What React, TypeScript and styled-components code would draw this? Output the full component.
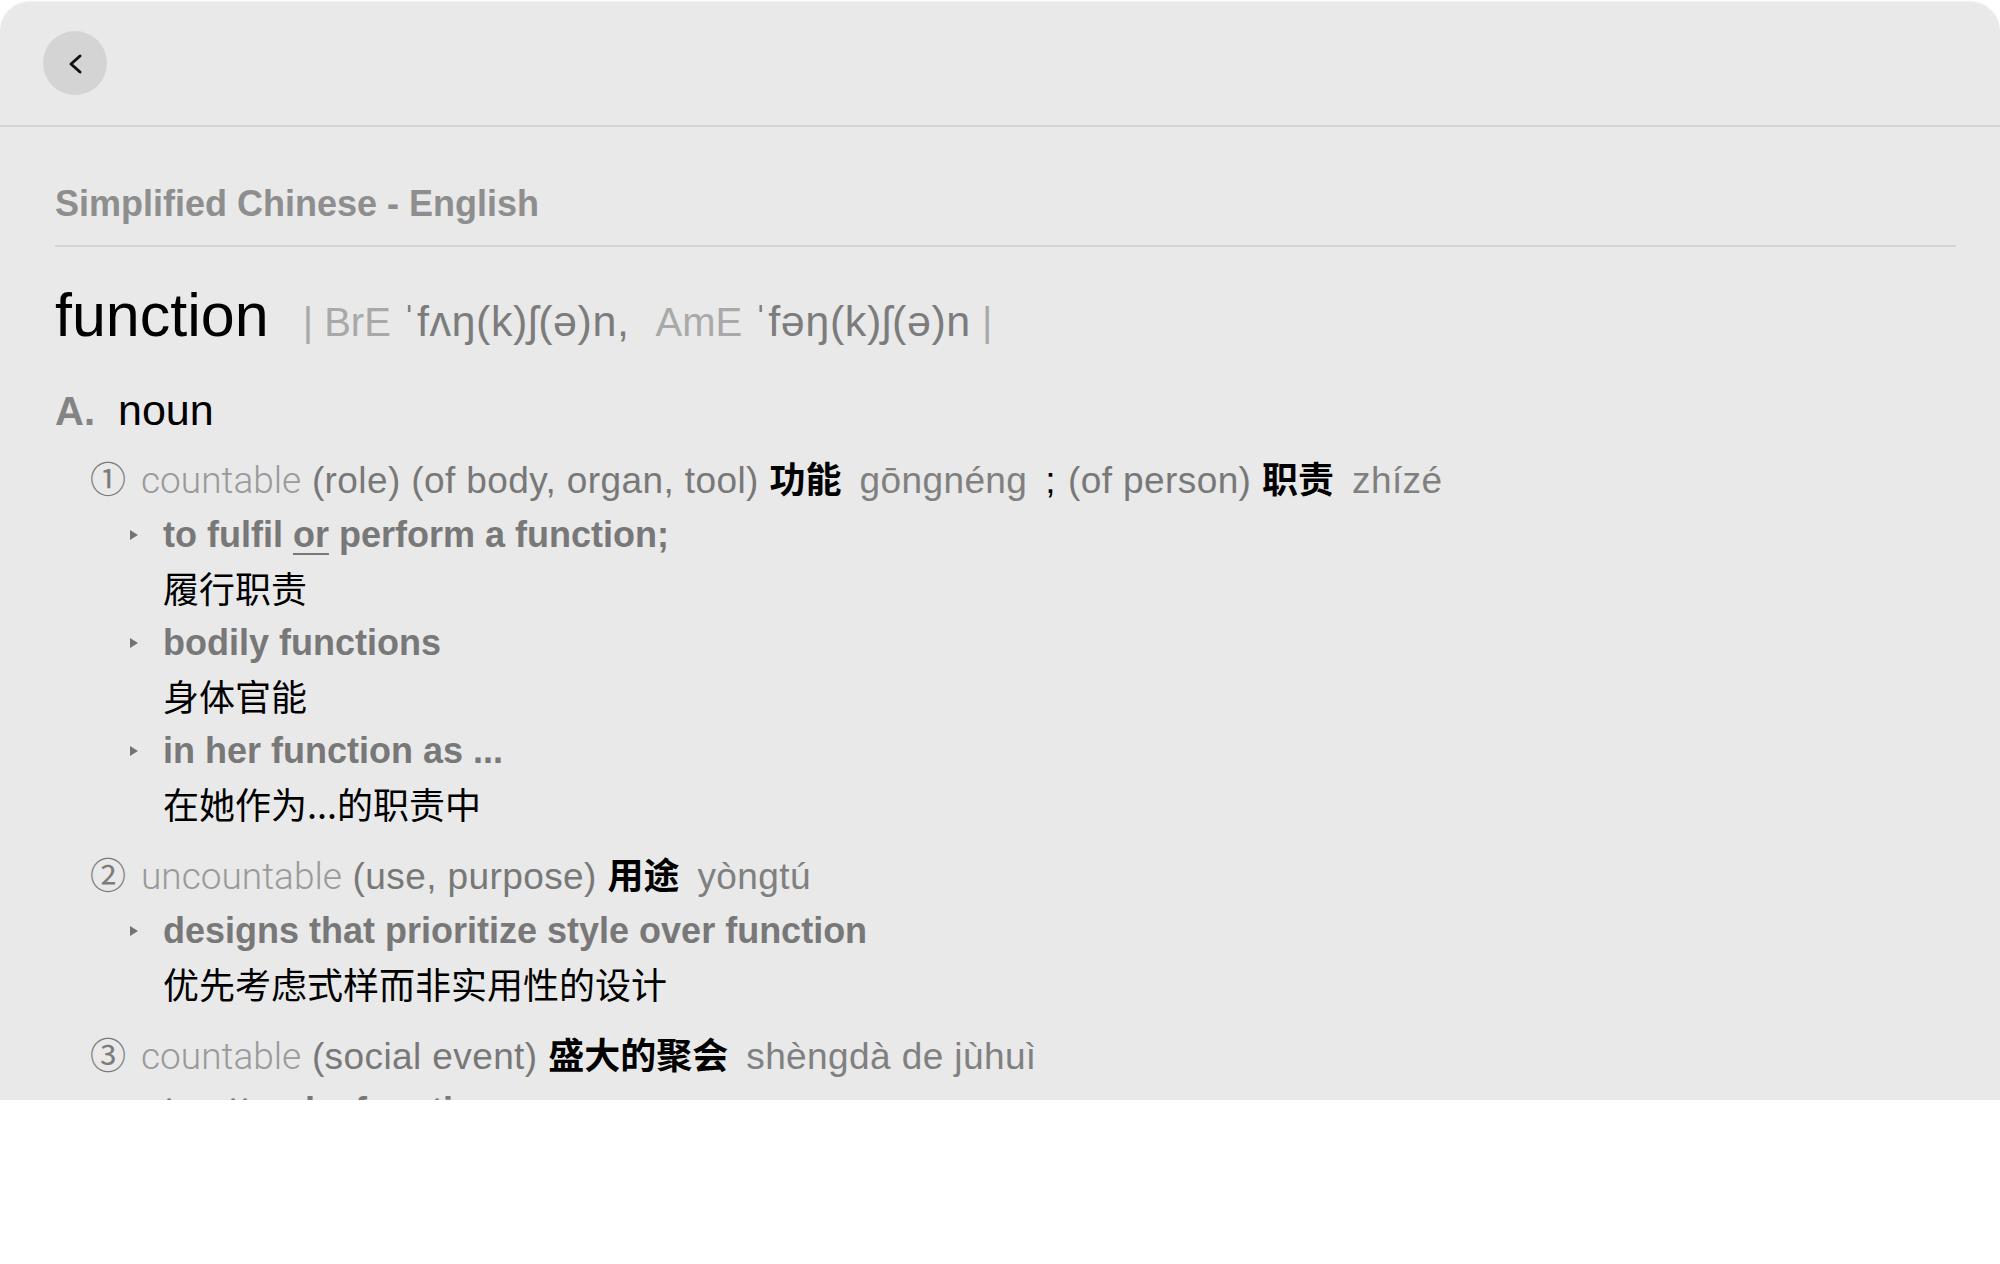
import React from "react"
import styled, { createGlobalStyle } from "styled-components"

const GlobalStyle = createGlobalStyle`
  html, body {
    margin: 0;
    padding: 0;
    background: #ffffff;
  }
  body {
    font-family: "Liberation Sans", "Noto Sans CJK SC", "DejaVu Sans", sans-serif;
  }
`

interface Example {
  en: React.ReactNode
  zh: string
}

interface Sense {
  num: string
  line: React.ReactNode
  examples: Example[]
}

const ChevronLeft = () => (
  <svg width="64" height="64" viewBox="0 0 64 64">
    <polyline
      points="37,25 28,33 37,41"
      fill="none"
      stroke="#111"
      strokeWidth="3"
      strokeLinecap="round"
      strokeLinejoin="round"
    />
  </svg>
)

// built inside a function so the styled parts below are defined by the time it runs
const getSenses = (): Sense[] => [
  {
    num: "①",
    line: (
      <>
        <Label>countable</Label> <Gloss>(role) (of body, organ, tool)</Gloss>{" "}
        <Zh>功能</Zh>
        <Pinyin>gōngnéng</Pinyin>
        <Sep>;</Sep>
        <Gloss>(of person)</Gloss> <Zh>职责</Zh>
        <Pinyin>zhízé</Pinyin>
      </>
    ),
    examples: [
      {
        en: (
          <>
            to fulfil <Under>or</Under> perform a function;
          </>
        ),
        zh: "履行职责",
      },
      { en: "bodily functions", zh: "身体官能" },
      { en: "in her function as ...", zh: "在她作为...的职责中" },
    ],
  },
  {
    num: "②",
    line: (
      <>
        <Label>uncountable</Label> <Gloss>(use, purpose)</Gloss> <Zh>用途</Zh>
        <Pinyin>yòngtú</Pinyin>
      </>
    ),
    examples: [
      { en: "designs that prioritize style over function", zh: "优先考虑式样而非实用性的设计" },
    ],
  },
  {
    num: "③",
    line: (
      <>
        <Label>countable</Label> <Gloss>(social event)</Gloss> <Zh>盛大的聚会</Zh>
        <Pinyin>shèngdà de jùhuì</Pinyin>
      </>
    ),
    examples: [{ en: "to attend a function", zh: "参加盛大的聚会" }],
  },
]

const App = () => {
  const senses = getSenses()
  return (
    <>
      <GlobalStyle />
      <Panel>
        <Toolbar>
          <BackButton aria-label="back">
            <ChevronLeft />
          </BackButton>
        </Toolbar>
        <Content>
          <DictName>Simplified Chinese - English</DictName>
          <Headword>
            function
            <Phonetic>
              <Bar>|</Bar> <Region>BrE</Region> <Ipa>ˈfʌŋ(k)ʃ(ə)n,</Ipa>
              <Region className="second">AmE</Region> <Ipa>ˈfəŋ(k)ʃ(ə)n</Ipa> <Bar>|</Bar>
            </Phonetic>
          </Headword>
          <PosRow>
            <PosLetter>A.</PosLetter>
            <PosName>noun</PosName>
          </PosRow>
          <SenseList>
            {senses.map((s) => (
              <SenseBlock key={s.num}>
                <SenseLine>
                  <Num>{s.num}</Num>
                  {s.line}
                </SenseLine>
                {s.examples.map((ex, i) => (
                  <ExampleRow key={i}>
                    <Triangle />
                    <div>
                      <ExampleEn>{ex.en}</ExampleEn>
                      <ExampleZh>{ex.zh}</ExampleZh>
                    </div>
                  </ExampleRow>
                ))}
              </SenseBlock>
            ))}
          </SenseList>
        </Content>
      </Panel>
    </>
  )
}

const Panel = styled.div`
  margin-top: 2px;
  height: 1098px;
  background: #e8e9e8;
  border-radius: 30px 30px 0 0;
  box-shadow: 0 -1px 2px rgba(0, 0, 0, 0.06);
  overflow: hidden;
`

const Toolbar = styled.div`
  height: 123px;
  display: flex;
  align-items: center;
  padding-left: 43px;
  border-bottom: 2px solid #d3d4d3;
  box-sizing: content-box;
`

const BackButton = styled.div`
  width: 64px;
  height: 64px;
  border-radius: 50%;
  background: #d3d4d3;
  display: flex;
  align-items: center;
  justify-content: center;
  margin-top: -1px;
`

const Content = styled.div`
  padding: 55px 44px 0 55px;
`

const DictName = styled.div`
  font-size: 36px;
  line-height: 44px;
  font-weight: 700;
  color: #8e8e8e;
  padding-bottom: 19px;
  border-bottom: 2px solid #d3d4d3;
`

const Headword = styled.div`
  margin-top: 32px;
  font-size: 61px;
  line-height: 72px;
  color: #000;
  white-space: nowrap;
`

const Phonetic = styled.span`
  font-size: 40px;
  margin-left: 34px;
  color: #7c7c7c;
  .second {
    margin-left: 26px;
  }
`

const Bar = styled.span`
  color: #a9a9a9;
`

const Region = styled.span`
  color: #a9a9a9;
`

const Ipa = styled.span`
  font-size: 43px;
  letter-spacing: 0.6px;
  color: #7c7c7c;
`

const PosRow = styled.div`
  margin-top: 25px;
  line-height: 54px;
  display: flex;
  align-items: baseline;
`

const PosLetter = styled.span`
  font-size: 40px;
  font-weight: 700;
  color: #848484;
  width: 63px;
`

const PosName = styled.span`
  font-size: 43px;
  color: #000;
`

const SenseList = styled.div`
  margin-top: 12px;
  display: flex;
  flex-direction: column;
  gap: 14px;
  padding-left: 35px;
`

const SenseBlock = styled.div``

const SenseLine = styled.div`
  font-size: 37px;
  line-height: 54px;
  letter-spacing: 0.4px;
  white-space: nowrap;
  color: #7a7a7a;
`

const Num = styled.span`
  display: inline-block;
  width: 51px;
  color: #7c7c7c;
  font-family: "Noto Sans CJK SC", sans-serif;
  font-weight: 400;
  font-size: 36px;
  letter-spacing: 0;
`

const Label = styled.span`
  font-family: "Roboto", "Liberation Sans", sans-serif;
  font-weight: 300;
  letter-spacing: 0;
  color: #9a9a9a;
`

const Gloss = styled.span`
  color: #787878;
`

const Zh = styled.span`
  font-family: "Noto Sans CJK SC", sans-serif;
  font-size: 36px;
  font-weight: 700;
  letter-spacing: 0;
  color: #000;
`

const Pinyin = styled.span`
  margin-left: 18px;
  color: #808080;
`

const Sep = styled.span`
  color: #000;
  margin: 0 12px 0 18px;
`

const ExampleRow = styled.div`
  display: grid;
  grid-template-columns: 33px 1fr;
  padding-left: 40px;
`

const Triangle = styled.span`
  width: 0;
  height: 0;
  margin-top: 22px;
  border-top: 5.5px solid transparent;
  border-bottom: 5.5px solid transparent;
  border-left: 8px solid #747474;
`

const ExampleEn = styled.div`
  font-size: 36px;
  line-height: 54px;
  font-weight: 700;
  color: #787878;
  white-space: nowrap;
`

const Under = styled.span`
  text-decoration: underline;
  text-decoration-thickness: 2px;
  text-underline-offset: 6px;
`

const ExampleZh = styled.div`
  font-family: "Noto Sans CJK SC", sans-serif;
  font-size: 36px;
  line-height: 54px;
  margin: -2px 0 2px;
  color: #000;
  white-space: nowrap;
`

export default App
